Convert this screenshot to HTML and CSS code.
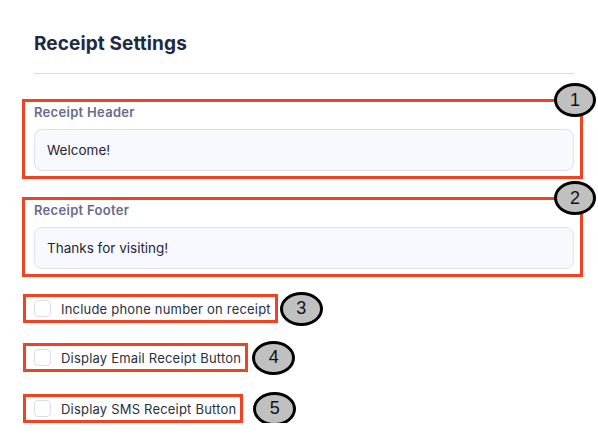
FILE: index.html
```html
<!DOCTYPE html>
<html>
<head>
<meta charset="utf-8">
<link rel="stylesheet" href="styles.css">
</head>
<body>
<div class="page">
  <h1 class="title">Receipt Settings</h1>
  <div class="divider"></div>

  <div class="field annot">
    <label class="field-label">Receipt Header</label>
    <div class="input">Welcome!</div>
    <span class="badge badge-corner">1</span>
  </div>

  <div class="field annot field-2">
    <label class="field-label">Receipt Footer</label>
    <div class="input">Thanks for visiting!</div>
    <span class="badge badge-corner">2</span>
  </div>

  <div class="checks">
    <div class="check-row">
      <div class="check annot"><span class="box"></span><span class="check-text">Include phone number on receipt</span></div>
      <span class="badge badge-side s3">3</span>
    </div>
    <div class="check-row">
      <div class="check annot"><span class="box"></span><span class="check-text">Display Email Receipt Button</span></div>
      <span class="badge badge-side s4">4</span>
    </div>
    <div class="check-row r5">
      <div class="check annot"><span class="box"></span><span class="check-text">Display SMS Receipt Button</span></div>
      <span class="badge badge-side s5">5</span>
    </div>
  </div>
</div>
</body>
</html>
```

FILE: styles.css
```css
html, body {
  margin: 0;
  padding: 0;
  background: #ffffff;
}
body {
  font-family: "Inter", "Liberation Sans", sans-serif;
  color: #1f2433;
}
.page {
  width: 540px;
  padding: 32px 0 0 34px;
}
.title {
  margin: 0;
  font-size: 19px;
  line-height: 24px;
  font-weight: 700;
  color: #1e2a44;
  letter-spacing: 0.1px;
}
.divider {
  margin-top: 17px;
  height: 1px;
  background: #d7dde7;
}
.annot {
  border: 3px solid #f04323;
  position: relative;
}
.field {
  margin: 25px -9px 0 -12px;
  padding: 1px 6px 5px 9px;
}
.field-2 {
  margin-top: 18px;
}
.field-label {
  display: block;
  font-size: 13px;
  line-height: 18px;
  font-weight: 600;
  color: #676b8c;
  letter-spacing: 0.3px;
  margin-bottom: 8px;
}
.input {
  height: 40px;
  border: 1px solid #dde1f0;
  border-radius: 8px;
  background: #f8f9fe;
  box-sizing: content-box;
  padding: 0 12px;
  display: flex;
  align-items: center;
  font-size: 13.5px;
  color: #1f2535;
}
.badge {
  width: 36px;
  height: 28px;
  border: 3px solid #000;
  border-radius: 50%;
  background: #c0c0c0;
  display: flex;
  align-items: center;
  justify-content: center;
  font-family: "Liberation Sans", sans-serif;
  font-size: 18px;
  color: #111;
}
.badge-corner {
  position: absolute;
  right: -16px;
  top: -19px;
}
.checks {
  margin: 17px 0 0 -11px;
  display: flex;
  flex-direction: column;
  gap: 20px;
}
.check-row {
  display: flex;
  align-items: center;
}
.r5 {
  margin-top: 2px;
}
.check {
  display: inline-flex;
  align-items: center;
  height: 23px;
  padding: 0 4px 0 8px;
  gap: 10px;
}
.box {
  width: 15px;
  height: 15px;
  border: 1px solid #d9ddec;
  border-radius: 4px;
  background: #fff;
}
.check-text {
  font-size: 13px;
  letter-spacing: 0.2px;
  color: #2a3040;
}
.badge-side {
  width: 37px;
  height: 28px;
  margin: -3px 0;
}
.s3 { margin-left: 2px; }
.s4 { margin-left: 4px; }
.s5 { margin-left: 10px; }
```
